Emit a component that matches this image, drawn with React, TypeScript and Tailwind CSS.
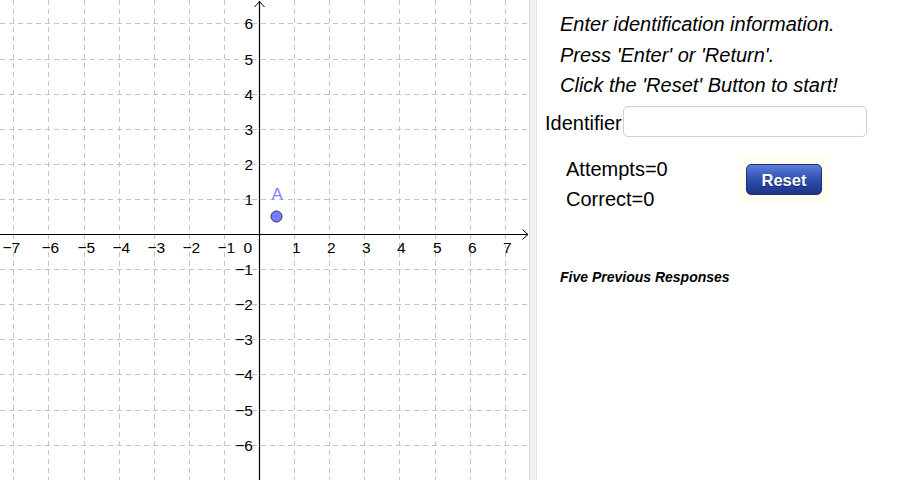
import React from "react";

const U = 35.1;
const OX = 259.5;
const OY = 234.5;
const px = (k: number) => Math.floor(OX + k * U) + 0.5;
const py = (k: number) => Math.floor(OY - k * U) + 0.5;

const range = (a: number, b: number) => {
  const r: number[] = [];
  for (let i = a; i <= b; i++) r.push(i);
  return r;
};

function Graph() {
  const minus = "\u2212";
  const fs = 15.5;
  return (
    <svg
      width={529}
      height={480}
      className="block"
      fontFamily="'Liberation Sans', Arial, sans-serif"
    >
      <rect x={0} y={0} width={529} height={480} fill="#ffffff" />
      {range(-7, 7)
        .filter((k) => k !== 0)
        .map((k) => (
          <line
            key={"v" + k}
            x1={px(k)}
            y1={0}
            x2={px(k)}
            y2={480}
            stroke="#c4c4c4"
            strokeWidth={1}
            strokeDasharray="5 4"
            shapeRendering="crispEdges"
          />
        ))}
      {range(-7, 6)
        .filter((k) => k !== 0)
        .map((k) => (
          <line
            key={"h" + k}
            x1={0}
            y1={py(k)}
            x2={529}
            y2={py(k)}
            stroke="#c4c4c4"
            strokeWidth={1}
            strokeDasharray="5 4"
            shapeRendering="crispEdges"
          />
        ))}
      {/* axes */}
      <line x1={OX} y1={1} x2={OX} y2={480} stroke="#000" strokeWidth={1.2} />
      <line x1={0} y1={OY} x2={528} y2={OY} stroke="#000" strokeWidth={1.2} />
      <polyline
        points={`${OX - 5},7 ${OX},1.5 ${OX + 5},7`}
        fill="none"
        stroke="#000"
        strokeWidth={1}
      />
      <polyline
        points={`522.5,${OY - 5} 528,${OY} 522.5,${OY + 5}`}
        fill="none"
        stroke="#000"
        strokeWidth={1}
      />
      {/* x labels */}
      {range(-7, 7).map((k) => {
        if (k === 0) {
          return (
            <text key={"xl0"} x={243.5} y={253} fontSize={fs} fill="#000">
              0
            </text>
          );
        }
        const label = k < 0 ? minus + Math.abs(k) : String(k);
        const x = k < 0 ? (k === -7 ? 2.5 : px(k) - 7) : px(k) - 2.5;
        return (
          <text key={"xl" + k} x={x} y={253} fontSize={fs} fill="#000">
            {label}
          </text>
        );
      })}
      {/* y labels */}
      {range(-6, 6)
        .filter((k) => k !== 0)
        .map((k) => {
          const label = k < 0 ? minus + Math.abs(k) : String(k);
          return (
            <text
              key={"yl" + k}
              x={253}
              y={py(k) + 5.5}
              fontSize={fs}
              fill="#000"
              textAnchor="end"
            >
              {label}
            </text>
          );
        })}
      {/* point A */}
      <text x={271.5} y={199.5} fontSize={17} fill="#7f7fff">
        A
      </text>
      <circle
        cx={276.5}
        cy={216.5}
        r={5.5}
        fill="#7b7bff"
        stroke="#303060"
        strokeWidth={1}
      />
    </svg>
  );
}

export default function App() {
  return (
    <div className="w-[900px] h-[480px] flex bg-white overflow-hidden text-black font-['Liberation_Sans',Arial,sans-serif]">
      <div className="w-[529px] h-[480px] shrink-0">
        <Graph />
      </div>
      <div className="w-[8px] h-[480px] shrink-0 bg-[#f0f0f0] border-l border-l-[#d9d9d9] border-r border-r-[#e6e6e6]" />
      <div className="flex-1 flex flex-col">
        <div className="pl-[23px] pt-[9px] italic text-[20px] leading-[30.5px]">
          <p>Enter identification information.</p>
          <p>Press 'Enter' or 'Return'.</p>
          <p>Click the 'Reset' Button to start!</p>
        </div>
        <div className="flex items-start pl-[8px] mt-[5px]">
          <span className="text-[20px] leading-[20px] mt-[7px]">Identifier</span>
          <div className="ml-[1px] w-[244px] h-[31px] border border-[#d0d0d0] rounded-[5px] bg-white shadow-[inset_0_1px_1px_rgba(0,0,0,0.04)]" />
        </div>
        <div className="flex items-start mt-[17px]">
          <div className="pl-[29px] w-[201px] text-[20px] leading-[30px]">
            <div>Attempts=0</div>
            <div>Correct=0</div>
          </div>
          <div className="mt-[2px] bg-[#fdfdf0] px-[8px] pt-[8px] pb-[7px]">
            <div className="w-[76px] h-[31px] pt-[2px] rounded-[5px] border border-[#1b2f78] bg-linear-to-b from-[#5a7ed8] via-[#2f50b0] to-[#1d3487] flex items-center justify-center text-white font-bold text-[16.5px] leading-none [text-shadow:0_1px_1px_rgba(0,0,0,0.4)]">
              Reset
            </div>
          </div>
        </div>
        <div className="pl-[23px] mt-[53px] text-[14px] leading-[20px] font-bold italic">
          Five Previous Responses
        </div>
      </div>
    </div>
  );
}
